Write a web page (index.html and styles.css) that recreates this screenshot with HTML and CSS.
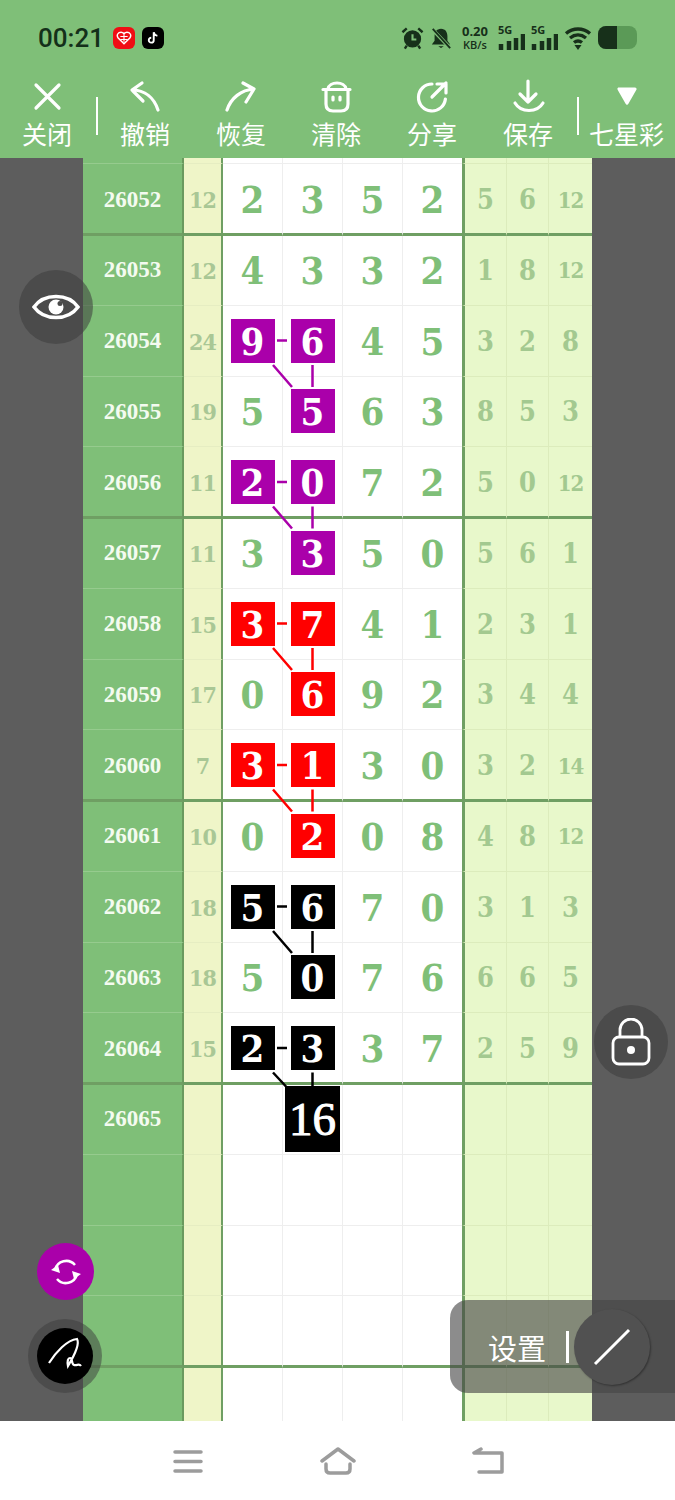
FILE: index.html
```html
<!DOCTYPE html>
<html lang="zh">
<head>
  <meta charset="UTF-8">
  <meta name="viewport" content="width=device-width, initial-scale=1.0">
  <title>七星彩</title>
  <link rel="stylesheet" href="styles.css">
</head>
<body>
<div class="phone">
  <header class="topbar">
    <div class="status">
      <span class="time">00:21</span>
      <span class="app app-red"><svg viewBox="0 0 22 22" width="16" height="16"><path d="M11 19 3 11c-3-4 0-8 4-8 2 0 3 1 4 2 1-1 2-2 4-2 4 0 7 4 4 8z" fill="none" stroke="#fff" stroke-width="2"/><path d="M6 9h10M6 13h10M11 6v10" stroke="#fff" stroke-width="1.5"/></svg></span>
      <span class="app app-black"><svg viewBox="0 0 22 22" width="16" height="16"><path d="M12 3v11a3.400 3.400 0 1 1-3.400-3.400M12 3c.5 3 2.500 4.500 5 5" fill="none" stroke="#fff" stroke-width="2.600"/></svg></span>
      <span class="status-right">
        <svg class="st-icon" viewBox="0 0 24 24" width="23" height="24"><circle cx="12" cy="13" r="9" fill="#17301a"/><path d="M12 8v5.500h4" stroke="#7fbf78" stroke-width="2.200" fill="none"/><path d="M1.500 6 6 2M22.500 6 18 2M4 23l2-3M20 23l-2-3" stroke="#17301a" stroke-width="2.500"/></svg>
        <svg class="st-icon" viewBox="0 0 24 24" width="22" height="24"><path d="M12 2c5 0 7 4 7 8v5l3 4H2l3-4v-5c0-4 2-8 7-8zM9 21h6l-3 2z" fill="#17301a"/><path d="M2 2l20 21" stroke="#7fbf78" stroke-width="4"/><path d="M3 2l19 21" stroke="#17301a" stroke-width="2"/></svg>
        <span class="speed"><b>0.20</b><b class="unit">KB/s</b></span>
        <span class="signal"><i class="five-g">5G</i><svg viewBox="0 0 27 16" width="27" height="16"><path d="M3 10v6M11 7v9M18 4v12M25 0v16" stroke="#17301a" stroke-width="4.500"/></svg></span>
        <span class="signal"><i class="five-g">5G</i><svg viewBox="0 0 27 16" width="27" height="16"><path d="M3 10v6M11 7v9M18 4v12M25 0v16" stroke="#17301a" stroke-width="4.500"/></svg></span>
        <svg class="st-icon wifi" viewBox="0 0 28 24" width="28" height="24"><path d="M2 7.500c7-6 17-6 24 0M6 12c5-4 11-4 16 0M10 16.500c2.500-2 5.500-2 8 0" fill="none" stroke="#17301a" stroke-width="3.400"/><path d="M10.500 19h7L14 24z" fill="#17301a"/></svg>
        <span class="battery"><span class="battery-fill"></span></span>
      </span>
    </div>
    <nav class="tools">
      <div class="tool tool-split tool-close">
        <svg viewBox="0 0 40 40" width="40" height="40"><path d="M9 9l23 23M32 9 9 32"/></svg>
        <span>关闭</span>
      </div>
      <div class="tool">
        <svg viewBox="0 0 40 40" width="40" height="40"><path d="M17 7 7 14l11 11M7 14c13 0 22 8 26 20"/></svg>
        <span>撤销</span>
      </div>
      <div class="tool">
        <svg viewBox="0 0 40 40" width="40" height="40"><path d="M22 7l11 6-8 13M33 13C20 14 10 22 6 34"/></svg>
        <span>恢复</span>
      </div>
      <div class="tool">
        <svg viewBox="0 0 40 40" width="40" height="40"><path d="M7 13.500h27M12 13C13 5 29 5 30 13M10 14v14c0 5 3 7 7 7h8c4 0 7-2 7-7V14M17 21v3M24 21v3"/></svg>
        <span>清除</span>
      </div>
      <div class="tool">
        <svg viewBox="0 0 40 40" width="40" height="40"><path d="M20 8a13.500 13.500 0 1 0 13.400 15M20 21 34 7M25 8h9v9"/></svg>
        <span>分享</span>
      </div>
      <div class="tool tool-split">
        <svg viewBox="0 0 40 40" width="40" height="40"><path d="M20 5v21M12 18l8 8 8-8M7 27c6 10 22 10 28 0"/></svg>
        <span>保存</span>
      </div>
      <div class="tool">
        <svg viewBox="0 0 40 40" width="40" height="40"><path class="solid" d="M12 13h16l-8 14z"/></svg>
        <span>七星彩</span>
      </div>
    </nav>
  </header>

  <main class="board">
    <div class="row sliver"><div class="issue"></div><div class="sum"></div><div class="num"></div><div class="num"></div><div class="num"></div><div class="num"></div><div class="side"></div><div class="side"></div><div class="side"></div></div>

    <div class="row end"><div class="issue">26052</div><div class="sum small">12</div><div class="num">2</div><div class="num">3</div><div class="num">5</div><div class="num">2</div><div class="side">5</div><div class="side">6</div><div class="side small">12</div></div>
    <div class="row"><div class="issue">26053</div><div class="sum small">12</div><div class="num">4</div><div class="num">3</div><div class="num">3</div><div class="num">2</div><div class="side">1</div><div class="side">8</div><div class="side small">12</div></div>
    <div class="row"><div class="issue">26054</div><div class="sum small">24</div><div class="num"><b class="badge purple">9</b></div><div class="num"><b class="badge purple">6</b></div><div class="num">4</div><div class="num">5</div><div class="side">3</div><div class="side">2</div><div class="side">8</div></div>
    <div class="row"><div class="issue">26055</div><div class="sum small">19</div><div class="num">5</div><div class="num"><b class="badge purple">5</b></div><div class="num">6</div><div class="num">3</div><div class="side">8</div><div class="side">5</div><div class="side">3</div></div>
    <div class="row end"><div class="issue">26056</div><div class="sum small">11</div><div class="num"><b class="badge purple">2</b></div><div class="num"><b class="badge purple">0</b></div><div class="num">7</div><div class="num">2</div><div class="side">5</div><div class="side">0</div><div class="side small">12</div></div>
    <div class="row"><div class="issue">26057</div><div class="sum small">11</div><div class="num">3</div><div class="num"><b class="badge purple">3</b></div><div class="num">5</div><div class="num">0</div><div class="side">5</div><div class="side">6</div><div class="side">1</div></div>
    <div class="row"><div class="issue">26058</div><div class="sum small">15</div><div class="num"><b class="badge red">3</b></div><div class="num"><b class="badge red">7</b></div><div class="num">4</div><div class="num">1</div><div class="side">2</div><div class="side">3</div><div class="side">1</div></div>
    <div class="row"><div class="issue">26059</div><div class="sum small">17</div><div class="num">0</div><div class="num"><b class="badge red">6</b></div><div class="num">9</div><div class="num">2</div><div class="side">3</div><div class="side">4</div><div class="side">4</div></div>
    <div class="row end"><div class="issue">26060</div><div class="sum small">7</div><div class="num"><b class="badge red">3</b></div><div class="num"><b class="badge red">1</b></div><div class="num">3</div><div class="num">0</div><div class="side">3</div><div class="side">2</div><div class="side small">14</div></div>
    <div class="row"><div class="issue">26061</div><div class="sum small">10</div><div class="num">0</div><div class="num"><b class="badge red">2</b></div><div class="num">0</div><div class="num">8</div><div class="side">4</div><div class="side">8</div><div class="side small">12</div></div>
    <div class="row"><div class="issue">26062</div><div class="sum small">18</div><div class="num"><b class="badge black">5</b></div><div class="num"><b class="badge black">6</b></div><div class="num">7</div><div class="num">0</div><div class="side">3</div><div class="side">1</div><div class="side">3</div></div>
    <div class="row"><div class="issue">26063</div><div class="sum small">18</div><div class="num">5</div><div class="num"><b class="badge black">0</b></div><div class="num">7</div><div class="num">6</div><div class="side">6</div><div class="side">6</div><div class="side">5</div></div>
    <div class="row end"><div class="issue">26064</div><div class="sum small">15</div><div class="num"><b class="badge black">2</b></div><div class="num"><b class="badge black">3</b></div><div class="num">3</div><div class="num">7</div><div class="side">2</div><div class="side">5</div><div class="side">9</div></div>
    <div class="row"><div class="issue">26065</div><div class="sum"></div><div class="num"></div><div class="num"><b class="badge black big">16</b></div><div class="num"></div><div class="num"></div><div class="side"></div><div class="side"></div><div class="side"></div></div>
    <div class="row"><div class="issue"></div><div class="sum"></div><div class="num"></div><div class="num"></div><div class="num"></div><div class="num"></div><div class="side"></div><div class="side"></div><div class="side"></div></div>
    <div class="row"><div class="issue"></div><div class="sum"></div><div class="num"></div><div class="num"></div><div class="num"></div><div class="num"></div><div class="side"></div><div class="side"></div><div class="side"></div></div>
    <div class="row end"><div class="issue"></div><div class="sum"></div><div class="num"></div><div class="num"></div><div class="num"></div><div class="num"></div><div class="side"></div><div class="side"></div><div class="side"></div></div>
    <div class="row"><div class="issue"></div><div class="sum"></div><div class="num"></div><div class="num"></div><div class="num"></div><div class="num"></div><div class="side"></div><div class="side"></div><div class="side"></div></div>

    <!-- links between the marked numbers, in page coordinates -->
    <svg class="links" viewBox="0 158 675 1263" width="675" height="1263">
      <g stroke="#aa00aa"><path d="M277 340.500h10M312.500 365v22M273 365l19 22"/><path d="M277 482h10M312.500 506.500v22M273 506.500l19 22"/></g>
      <g stroke="#ff0000"><path d="M277 623.500h10M312.500 648v22M273 648l19 22"/><path d="M277 765h10M312.500 789.500v22M273 789.500l19 22"/></g>
      <g stroke="#000"><path d="M277 906.500h10M312.500 931v22M273 931l19 22"/><path d="M277 1048h10M312.500 1072.500v14M273 1072.500l13 14"/></g>
    </svg>
  </main>

  <footer class="navbar">
    <svg viewBox="0 0 30 24" width="30" height="24"><path d="M2 3h26M2 12.500h26M2 22h26"/></svg>
    <svg viewBox="0 0 36 28" width="36" height="28"><path d="M2 14 18 2l16 12M6 17v5c0 3 2 4 4 4h16c2 0 4-1 4-4v-5"/></svg>
    <svg viewBox="0 0 32 28" width="32" height="28"><path d="M9 2 2 6h28v19H7"/></svg>
  </footer>

  <button class="fab eye"><svg viewBox="0 0 48 48" width="48" height="48"><path d="M2 24C12 10 36 10 46 24 36 38 12 38 2 24z" fill="none" stroke="#fff" stroke-width="3.500"/><circle cx="24" cy="24" r="7.500" fill="#fff"/><circle cx="28" cy="20.500" r="2.500" fill="#4b4b4b"/></svg></button>
  <button class="fab lock"><svg viewBox="0 0 48 48" width="48" height="48"><path d="M13 19v-7a11 11 0 0 1 22 0v7" fill="none" stroke="#fff" stroke-width="2.800"/><rect x="6" y="19" width="36" height="27" rx="6" fill="none" stroke="#fff" stroke-width="2.800"/><circle cx="24" cy="32" r="4" fill="#fff"/></svg></button>
  <button class="fab sync"><svg viewBox="0 0 32 32" width="32" height="32"><path d="M5 14A11.500 11.500 0 0 1 25 9M27 18A11.500 11.500 0 0 1 7 23" fill="none" stroke="#fff" stroke-width="2.500"/><path d="M1 14l7-5 2 8zM31 18l-7 5-2-8z" fill="#fff"/></svg></button>
  <div class="pen-ring"><button class="fab pen"><svg viewBox="0 0 56 56" width="56" height="56"><path d="M12 35C19 24 30 12 40 11c3 5-3 17-9 27-1-5 0-8 2-8 3 0 1 6 4 7 3 1 5-2 7 1" fill="none" stroke="#fff" stroke-width="2.200"/></svg></button></div>

  <div class="settings">
    <span class="settings-label">设置</span>
    <span class="settings-bar"></span>
    <span class="settings-knob"><svg viewBox="0 0 40 40" width="40" height="40"><path d="M3 37 37 3" stroke="#fff" stroke-width="3"/></svg></span>
  </div>
</div>
</body>
</html>
```

FILE: styles.css
```css
* {
  box-sizing: border-box;
}

body {
  margin: 0;
  background-color: #ffffff;
}

.phone {
  position: relative;
  display: flex;
  flex-direction: column;
  width: 675px;
  height: 1500px;
  overflow: hidden;
}

/* top */

.topbar {
  height: 158px;
  background-color: #7fbf78;
}

.status {
  display: flex;
  align-items: center;
  height: 72px;
  padding: 3px 38px 0 38px;
}

.time {
  margin-right: 9px;
  color: #14301a;
  font-family: Roboto, sans-serif;
  font-size: 26px;
  font-weight: 500;
}

.app {
  display: flex;
  align-items: center;
  justify-content: center;
  width: 22px;
  height: 22px;
  margin-right: 7px;
  border-radius: 6px;
}

.app-red {
  background-color: #f00d14;
}

.app-black {
  background-color: #000000;
}

.status-right {
  display: flex;
  align-items: center;
  gap: 6px;
  margin-left: auto;
}

.speed {
  display: flex;
  flex-direction: column;
  width: 30px;
  margin: 0 2px;
  color: #17301a;
  font-family: "Open Sans", sans-serif;
  font-size: 13px;
  line-height: 13px;
  text-align: center;
}

.speed .unit {
  font-size: 11px;
  font-weight: 600;
}

.signal {
  position: relative;
  display: block;
  width: 27px;
  height: 24px;
  padding-top: 8px;
}

.signal svg {
  display: block;
}

.five-g {
  position: absolute;
  top: -4px;
  left: 0;
  color: #17301a;
  font-family: "Open Sans", sans-serif;
  font-size: 11px;
  font-style: normal;
  font-weight: 700;
}

.battery {
  display: block;
  width: 39px;
  height: 23px;
  overflow: hidden;
  border-radius: 8px;
  background-color: #5b9a57;
}

.battery-fill {
  display: block;
  width: 19px;
  height: 23px;
  background-color: #17301a;
}

.tools {
  display: grid;
  grid-template-columns: 94px 102px 90px 100px 92px 100px 97px;
  height: 86px;
}

.tool {
  position: relative;
  display: flex;
  flex-direction: column;
  align-items: center;
  color: #ffffff;
  font-family: "Noto Sans CJK SC", sans-serif;
  font-size: 25px;
  line-height: 34px;
  margin-top: 4px;
}

.tool svg {
  display: block;
  fill: none;
  stroke: #ffffff;
  stroke-width: 3.200;
  stroke-linecap: round;
  stroke-linejoin: round;
}

.tool svg .solid {
  fill: #ffffff;
}

.tool-split::after {
  content: "";
  position: absolute;
  top: 21px;
  right: -1px;
  width: 2px;
  height: 38px;
  background-color: #ffffff;
}

.tool-close::after {
  right: -4px;
}

/* board */

.board {
  position: relative;
  flex: 0 0 1263px;
  overflow: hidden;
  padding-left: 83px;
  background-color: #5d5d5d;
}

.row {
  position: relative;
  display: grid;
  grid-template-columns: 101px 39px 60px 60px 60px 59px 45px 42px 43px;
  width: 509px;
  height: 70.750px;
  font-family: "DejaVu Serif", serif;
  font-stretch: condensed;
  font-weight: 700;
}

.row.sliver {
  height: 6.250px;
}

.row.end {
  z-index: 1;
  height: 71.750px;
  margin-bottom: -1px;
}

.row > div {
  display: flex;
  align-items: center;
  justify-content: center;
  padding-top: 1px;
  border-bottom-style: solid;
  border-bottom-width: 1px;
}

.row.end > div {
  padding-top: 2px;
  border-bottom-width: 3px;
  border-bottom-color: #6f9f63;
}

.issue {
  border-right: 2px solid #6a9a5e;
  border-bottom-color: #96cb8e;
  background-color: #7fbf78;
  color: #f4fbf0;
  font-family: "Liberation Serif", serif;
  font-size: 23px;
}

.sum {
  border-right: 2px solid #6f9f63;
  border-bottom-color: #e6edc2;
  background-color: #eff5c8;
  color: #a9c795;
  font-size: 23px;
}

.num {
  border-right: 1px solid #eeeeee;
  border-bottom-color: #eeeeee;
  background-color: #ffffff;
  color: #7fbf78;
  font-size: 38px;
}

.num:nth-child(6) {
  border-right: 0;
}

.side {
  border-right: 1px solid #dcecbc;
  border-bottom-color: #dcecbc;
  background-color: #e8f8cb;
  color: #a3c990;
  font-size: 27px;
}

.side:nth-child(7) {
  border-left: 3px solid #6f9f63;
}

.side:last-child {
  border-right: 0;
}

.small {
  letter-spacing: -1px;
}

.side.small {
  font-size: 22px;
}

.badge {
  display: flex;
  align-items: center;
  justify-content: center;
  width: 44px;
  height: 44px;
  margin-top: -1px;
  padding-top: 1px;
  color: #ffffff;
  font-weight: 700;
}

.row.end .badge {
  margin-top: -1px;
}

.purple {
  background-color: #aa00aa;
}

.red {
  background-color: #ff0000;
}

.black {
  background-color: #000000;
}

.big {
  width: 55px;
  height: 66px;
  font-family: "Liberation Serif", serif;
  font-size: 47px;
  font-weight: 400;
  -webkit-text-stroke: 1px #ffffff;
}

.links {
  position: absolute;
  top: 0;
  left: 0;
  z-index: 2;
  fill: none;
  stroke-width: 2.500;
}

/* bottom */

.navbar {
  display: flex;
  flex: 1;
  align-items: center;
  gap: 116.500px;
  padding: 1px 0 0 173px;
  background-color: #ffffff;
}

.navbar svg {
  fill: none;
  stroke: #9c9c9c;
  stroke-width: 3.500;
  stroke-linecap: round;
  stroke-linejoin: round;
}

/* floating buttons */

.fab {
  position: absolute;
  z-index: 3;
  display: flex;
  align-items: center;
  justify-content: center;
  padding: 0;
  border: none;
  border-radius: 50%;
}

.eye,
.lock {
  width: 74px;
  height: 74px;
  background-color: rgba(60, 60, 60, 0.55);
}

.eye {
  top: 270px;
  left: 19px;
}

.lock {
  top: 1005px;
  left: 594px;
}

.sync {
  top: 1243px;
  left: 37px;
  width: 57px;
  height: 57px;
  background-color: #aa00aa;
}

.pen-ring {
  position: absolute;
  top: 1319px;
  left: 28px;
  z-index: 3;
  width: 74px;
  height: 74px;
  border-radius: 50%;
  background-color: rgba(60, 60, 60, 0.5);
}

.pen {
  top: 9px;
  left: 9px;
  width: 56px;
  height: 56px;
  background-color: #000000;
}

.settings {
  position: absolute;
  top: 1300px;
  left: 450px;
  z-index: 3;
  display: flex;
  align-items: center;
  width: 225px;
  height: 93px;
  padding-left: 38px;
  border-radius: 18px 0 0 18px;
  background-color: rgba(70, 70, 70, 0.62);
}

.settings-label {
  color: #ffffff;
  font-family: "Noto Sans CJK SC", sans-serif;
  font-size: 29px;
}

.settings-bar {
  width: 2.500px;
  height: 32px;
  margin-left: 20px;
  background-color: #ffffff;
}

.settings-knob {
  display: flex;
  align-items: center;
  justify-content: center;
  width: 76px;
  height: 76px;
  margin-left: 5px;
  border-radius: 50%;
  background-color: #515151;
  box-shadow: 1px 1px 2px rgba(0, 0, 0, 0.35);
}
```
